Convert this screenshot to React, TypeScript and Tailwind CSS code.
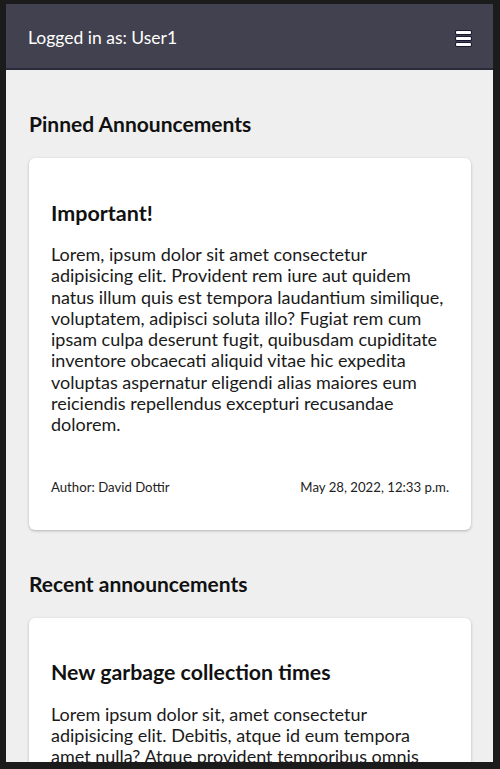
import React from "react";

const font = { fontFamily: '"Lato", "Open Sans", sans-serif' };

function Lines({ lines }: { lines: string[] }) {
  return (
    <div className="text-[18px] leading-[21.3px] text-[#1a1a1a]">
      {lines.map((l, i) => (
        <div key={i} className="whitespace-nowrap">{l}</div>
      ))}
    </div>
  );
}

export default function App() {
  return (
    <div className="w-[500px] h-[769px] bg-[#1b1b1b] pt-[4px] pl-[6px] pr-[7px] pb-[7px] overflow-hidden" style={font}>
      <div className="h-full flex flex-col overflow-hidden bg-[#efefef]">
        <header className="h-[66px] shrink-0 bg-[#42414f] border-b-2 border-[#2b2a3a] flex items-center justify-between pl-[22px] pr-[22px] pt-[4px]">
          <span className="text-white text-[17.5px]">Logged in as: User1</span>
          <div className="flex flex-col gap-[3px] w-[15px]">
            <div className="h-[3px] bg-white rounded-[1px] shadow-[0_0_0_1px_#1a1830]" />
            <div className="h-[3px] bg-white rounded-[1px] shadow-[0_0_0_1px_#1a1830]" />
            <div className="h-[3px] bg-white rounded-[1px] shadow-[0_0_0_1px_#1a1830]" />
          </div>
        </header>
        <main className="pl-[23px] pr-[22px] pt-[42px]">
          <h2 className="text-[21px] font-bold text-[#111] leading-[24px]">Pinned Announcements</h2>
          <div className="mt-[22px] bg-white rounded-[6px] shadow-[0_1px_3px_rgba(0,0,0,0.25)] px-[22px] pt-[42px] pb-[35px]">
            <h3 className="text-[21.5px] font-bold text-[#111] leading-[26px]">Important!</h3>
            <div className="mt-[18px]">
              <Lines
                lines={[
                  "Lorem, ipsum dolor sit amet consectetur",
                  "adipisicing elit. Provident rem iure aut quidem",
                  "natus illum quis est tempora laudantium similique,",
                  "voluptatem, adipisci soluta illo? Fugiat rem cum",
                  "ipsam culpa deserunt fugit, quibusdam cupiditate",
                  "inventore obcaecati aliquid vitae hic expedita",
                  "voluptas aspernatur eligendi alias maiores eum",
                  "reiciendis repellendus excepturi recusandae",
                  "dolorem.",
                ]}
              />
            </div>
            <div className="mt-[43px] flex justify-between text-[13.2px] text-[#222] leading-[16px]">
              <span>Author: David Dottir</span>
              <span>May 28, 2022, 12:33 p.m.</span>
            </div>
          </div>
          <h2 className="mt-[42px] text-[21px] font-bold text-[#111] leading-[24px]">Recent announcements</h2>
          <div className="mt-[22px] bg-white rounded-[6px] shadow-[0_1px_3px_rgba(0,0,0,0.25)] px-[22px] pt-[41px] pb-[30px]">
            <h3 className="text-[21.3px] font-bold text-[#111] leading-[26px]">New garbage collection times</h3>
            <div className="mt-[19px]">
              <Lines
                lines={[
                  "Lorem ipsum dolor sit, amet consectetur",
                  "adipisicing elit. Debitis, atque id eum tempora",
                  "amet nulla? Atque provident temporibus omnis",
                ]}
              />
            </div>
          </div>
        </main>
      </div>
    </div>
  );
}
